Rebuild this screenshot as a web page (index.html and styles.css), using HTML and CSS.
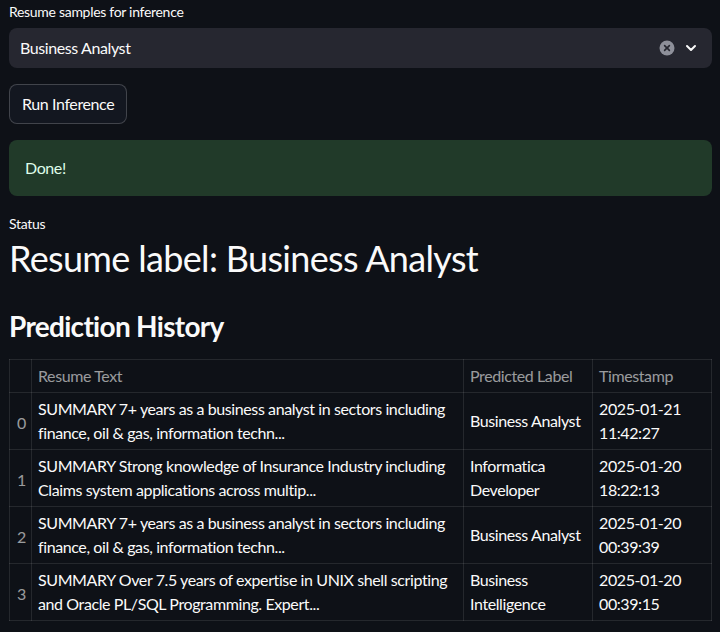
FILE: index.html
```html
<!DOCTYPE html>
<html>
<head>
<meta charset="utf-8">
<link rel="stylesheet" href="styles.css">
</head>
<body>
<div class="app">
  <div class="label">Resume samples for inference</div>
  <div class="select">
    <span class="select-value">Business Analyst</span>
    <span class="select-icons">
      <svg class="clear" width="16" height="16" viewBox="0 0 16 16"><circle cx="8" cy="8" r="7.5" fill="#8e909a"/><path d="M5.6 5.6 L10.4 10.4 M10.4 5.6 L5.6 10.4" stroke="#262730" stroke-width="1.6" stroke-linecap="round"/></svg>
      <svg class="chev" width="14" height="14" viewBox="0 0 14 14"><path d="M3 5 L7 9 L11 5" fill="none" stroke="#fafafa" stroke-width="2" stroke-linecap="round" stroke-linejoin="round"/></svg>
    </span>
  </div>
  <button class="btn">Run Inference</button>
  <div class="alert">Done!</div>
  <div class="metric-label">Status</div>
  <div class="metric-value">Resume label: Business Analyst</div>
  <h3 class="heading">Prediction History</h3>
  <table class="table">
    <colgroup>
      <col class="c-idx"><col class="c-text"><col class="c-label"><col class="c-time">
    </colgroup>
    <thead>
      <tr><th></th><th>Resume Text</th><th>Predicted Label</th><th>Timestamp</th></tr>
    </thead>
    <tbody>
      <tr><td class="idx">0</td><td>SUMMARY 7+ years as a business analyst in sectors including finance, oil &amp; gas, information techn...</td><td>Business Analyst</td><td>2025-01-21 11:42:27</td></tr>
      <tr><td class="idx">1</td><td>SUMMARY Strong knowledge of Insurance Industry including Claims system applications across multip...</td><td>Informatica Developer</td><td>2025-01-20 18:22:13</td></tr>
      <tr><td class="idx">2</td><td>SUMMARY 7+ years as a business analyst in sectors including finance, oil &amp; gas, information techn...</td><td>Business Analyst</td><td>2025-01-20 00:39:39</td></tr>
      <tr><td class="idx">3</td><td>SUMMARY Over 7.5 years of expertise in UNIX shell scripting and Oracle PL/SQL Programming. Expert...</td><td>Business Intelligence</td><td>2025-01-20 00:39:15</td></tr>
    </tbody>
  </table>
</div>
</body>
</html>
```

FILE: styles.css
```css
html, body {
  margin: 0;
  padding: 0;
  background: #0e1117;
  color: #fafafa;
  font-family: "Lato", "Open Sans", sans-serif;
  letter-spacing: -0.4px;
}
.app {
  display: flex;
  flex-direction: column;
  align-items: flex-start;
  padding: 2px 8px 0 9px;
}
.label {
  font-size: 14px;
  line-height: 20px;
  margin-bottom: 6px;
  letter-spacing: -0.3px;
}
.select {
  align-self: stretch;
  height: 40px;
  background: #262730;
  border-radius: 8px;
  display: flex;
  align-items: center;
  justify-content: space-between;
  padding: 0 14px 1px 11px;
  box-sizing: border-box;
}
.select-value {
  font-size: 16px;
}
.select-icons {
  display: flex;
  align-items: center;
  gap: 9px;
}
.clear, .chev {
  display: block;
}
.btn {
  margin-top: 16px;
  height: 40px;
  padding: 0 12px 2px;
  background: #131720;
  color: #fafafa;
  border: 1px solid rgba(250, 250, 250, 0.2);
  border-radius: 8px;
  font-family: inherit;
  font-size: 16px;
  letter-spacing: -0.4px;
}
.alert {
  align-self: stretch;
  margin-top: 16px;
  background: #213a29;
  color: #dffde9;
  border-radius: 8px;
  padding: 16px;
  font-size: 16px;
  line-height: 24px;
}
.metric-label {
  margin-top: 18px;
  font-size: 14px;
  line-height: 20px;
  letter-spacing: -0.3px;
}
.metric-value {
  margin-top: 2px;
  font-size: 36px;
  line-height: 44px;
  letter-spacing: -0.67px;
}
.heading {
  margin: 26px 0 0;
  font-size: 28px;
  line-height: 40px;
  font-weight: 700;
  letter-spacing: -0.7px;
}
.table {
  align-self: stretch;
  margin-top: 13px;
  border-collapse: collapse;
  table-layout: fixed;
  font-size: 16px;
  line-height: 24px;
}
.c-idx { width: 22px; }
.c-label { width: 129px; }
.c-time { width: 119px; }
.table th, .table td {
  border: 1px solid rgba(250, 250, 250, 0.1);
  padding: 4px 6px;
  text-align: left;
  vertical-align: middle;
}
.table th {
  font-weight: 400;
  color: rgba(250, 250, 250, 0.6);
}
.table td.idx {
  color: rgba(250, 250, 250, 0.6);
  padding: 4px 0 0 7px;
}
```
